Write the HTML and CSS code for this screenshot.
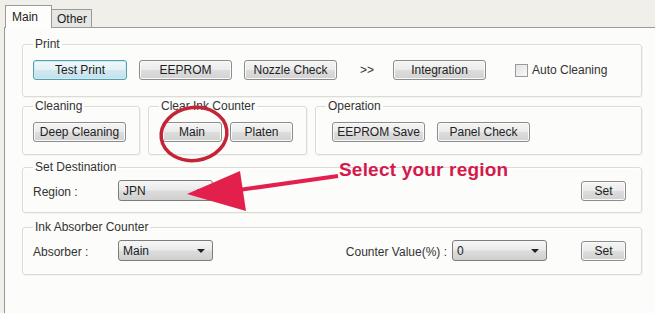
FILE: index.html
```html
<!DOCTYPE html>
<html>
<head>
<meta charset="utf-8">
<link rel="stylesheet" href="styles.css">
</head>
<body>
<div class="window">
  <div class="tabs">
    <div class="tab active">Main</div>
    <div class="tab">Other</div>
  </div>
  <div class="panel">
    <fieldset class="group print">
      <legend>Print</legend>
      <div class="row">
        <button class="btn focus">Test Print</button>
        <button class="btn">EEPROM</button>
        <button class="btn">Nozzle Check</button>
        <span class="chev">&gt;&gt;</span>
        <button class="btn">Integration</button>
        <label class="check"><span class="box"></span>Auto Cleaning</label>
      </div>
    </fieldset>
    <div class="grouprow">
      <fieldset class="group cleaning">
        <legend>Cleaning</legend>
        <div class="row"><button class="btn">Deep Cleaning</button></div>
      </fieldset>
      <fieldset class="group clear">
        <legend>Clear Ink Counter</legend>
        <div class="row tight">
          <button class="btn small">Main</button>
          <button class="btn small2">Platen</button>
        </div>
      </fieldset>
      <fieldset class="group operation">
        <legend>Operation</legend>
        <div class="row">
          <button class="btn">EEPROM Save</button>
          <button class="btn">Panel Check</button>
        </div>
      </fieldset>
    </div>
    <fieldset class="group dest">
      <legend>Set Destination</legend>
      <div class="row">
        <span class="lbl">Region :</span>
        <div class="select"><span>JPN</span><span class="caret"></span></div>
        <span class="spacer"></span>
        <button class="btn set">Set</button>
      </div>
    </fieldset>
    <fieldset class="group absorber">
      <legend>Ink Absorber Counter</legend>
      <div class="row">
        <span class="lbl">Absorber :</span>
        <div class="select"><span>Main</span><span class="caret"></span></div>
        <span class="spacer"></span>
        <span class="lbl2">Counter Value(%) :</span>
        <div class="select"><span>0</span><span class="caret"></span></div>
        <span class="spacer2"></span>
        <button class="btn set">Set</button>
      </div>
    </fieldset>
  </div>

  <svg class="annot" width="655" height="313" viewBox="0 0 655 313">
    <ellipse cx="194" cy="134" rx="33" ry="26.5" transform="rotate(-8 194 134)" fill="none" stroke="#c42437" stroke-width="3.5"/>
    <line x1="338" y1="176" x2="232" y2="191" stroke="#e3204c" stroke-width="4"/>
    <polygon points="187,194 240,171 246,211" fill="#e3204c"/>
  </svg>
  <div class="callout">Select your region</div>
</div>
</body>
</html>
```

FILE: styles.css
```css
* { box-sizing: border-box; }
html, body { margin: 0; padding: 0; }
body {
  width: 655px;
  height: 313px;
  overflow: hidden;
  background: #f0efe9;
  font-family: "Liberation Sans", Arial, sans-serif;
  font-size: 12px;
  color: #222;
}
.window {
  position: relative;
  width: 655px;
  height: 313px;
  padding-top: 5px;
}
.tabs {
  display: flex;
  align-items: flex-end;
  height: 22px;
  margin-left: 5px;
}
.tab {
  height: 18px;
  width: 40px;
  padding: 2px 0 0 5px;
  border: 1px solid #9a9a9a;
  border-bottom: none;
  border-left: none;
  background: #e6e6e2;
  font-size: 12px;
}
.tab.active {
  height: 23px;
  width: 47px;
  padding: 4px 0 0 6px;
  border-left: 1px solid #9a9a9a;
  background: #fdfdfb;
  position: relative;
  z-index: 1;
  margin-bottom: -1px;
}
.panel {
  margin-left: 4px;
  height: 286px;
  border-top: 1px solid #9a9a9a;
  border-left: 1px solid #9a9a9a;
  background: #fcfcfa;
  padding: 9px 0 0 17px;
}
.group {
  margin: 0;
  border: 1px solid #dcdcd6;
  border-radius: 3px;
  box-shadow: inset 1px 1px 0 #fff, 1px 1px 0 #f2f2ee;
  padding: 9px 10px 0 10px;
  min-width: 0;
}
.group legend {
  padding: 0 2px;
  margin-left: 0;
  line-height: 14px;
  font-size: 12px;
  color: #333;
}
.print { width: 620px; height: 60px; }
.row {
  display: flex;
  align-items: center;
  gap: 12px;
}
.row.tight { gap: 8px; }
.btn {
  height: 20px;
  width: 93px;
  padding: 0;
  font-family: "Liberation Sans", Arial, sans-serif;
  font-size: 12px;
  color: #222;
  border: 1px solid #8c8c8c;
  border-radius: 3px;
  background: linear-gradient(#f5f5f5 0%, #ebebeb 48%, #dddddd 52%, #d1d1d1 100%);
  box-shadow: inset 0 0 0 1px #fafafa;
}
.btn.focus {
  width: 94px;
  border-color: #4fa0b4;
  background: linear-gradient(#f0f8fb 0%, #e4f1f6 48%, #d2e8f0 52%, #c4e0ea 100%);
  box-shadow: inset 0 0 0 1px #cfeaf2;
}
.btn.small { width: 60px; }
.btn.small2 { width: 63px; }
.btn.set { width: 45px; }
.chev {
  width: 32px;
  padding-left: 4px;
  text-align: center;
  color: #333;
}
.check {
  display: flex;
  align-items: center;
  gap: 4px;
  margin-left: 17px;
  color: #333;
}
.box {
  width: 13px;
  height: 13px;
  border: 1px solid #9a9a9a;
  background: linear-gradient(135deg, #e4e4e4, #f8f8f8);
}
.grouprow {
  display: flex;
  align-items: flex-start;
  gap: 8px;
  margin-top: 2px;
}
.cleaning { width: 118px; height: 56px; }
.clear { width: 159px; height: 56px; }
.clear .row { margin-left: 3px; }
.operation { width: 327px; height: 56px; }
.operation .row { margin-left: 6px; }
.dest { width: 620px; height: 53px; margin-top: 5px; padding-top: 6px; }
.absorber { width: 620px; height: 55px; margin-top: 7px; padding-top: 6px; }
.lbl { color: #333; margin-top: 3px; }
.lbl2 { color: #333; margin-top: 3px; }
.select {
  display: flex;
  align-items: center;
  justify-content: space-between;
  width: 95px;
  height: 21px;
  padding: 0 7px 0 4px;
  border: 1px solid #7c7c7c;
  border-radius: 3px;
  background: linear-gradient(#f6f6f6 0%, #eaeaea 48%, #dcdcdc 52%, #d0d0d0 100%);
  color: #222;
}
.caret {
  width: 0;
  height: 0;
  border-left: 4px solid transparent;
  border-right: 4px solid transparent;
  border-top: 4px solid #222;
}
.spacer { flex: 1; }
.dest .row, .absorber .row { gap: 0; }
.dest .lbl, .absorber .lbl { width: 85px; }
.absorber .lbl2 { margin-right: 5px; }
.spacer2 { width: 34px; }
.dest .set, .absorber .set { margin-right: 5px; }
.annot {
  position: absolute;
  left: 0;
  top: 0;
  pointer-events: none;
}
.callout {
  position: absolute;
  left: 339px;
  top: 159px;
  font-family: "Liberation Sans", Arial, sans-serif;
  font-weight: bold;
  font-size: 19px;
  letter-spacing: 0.2px;
  color: #d4194c;
}
```
